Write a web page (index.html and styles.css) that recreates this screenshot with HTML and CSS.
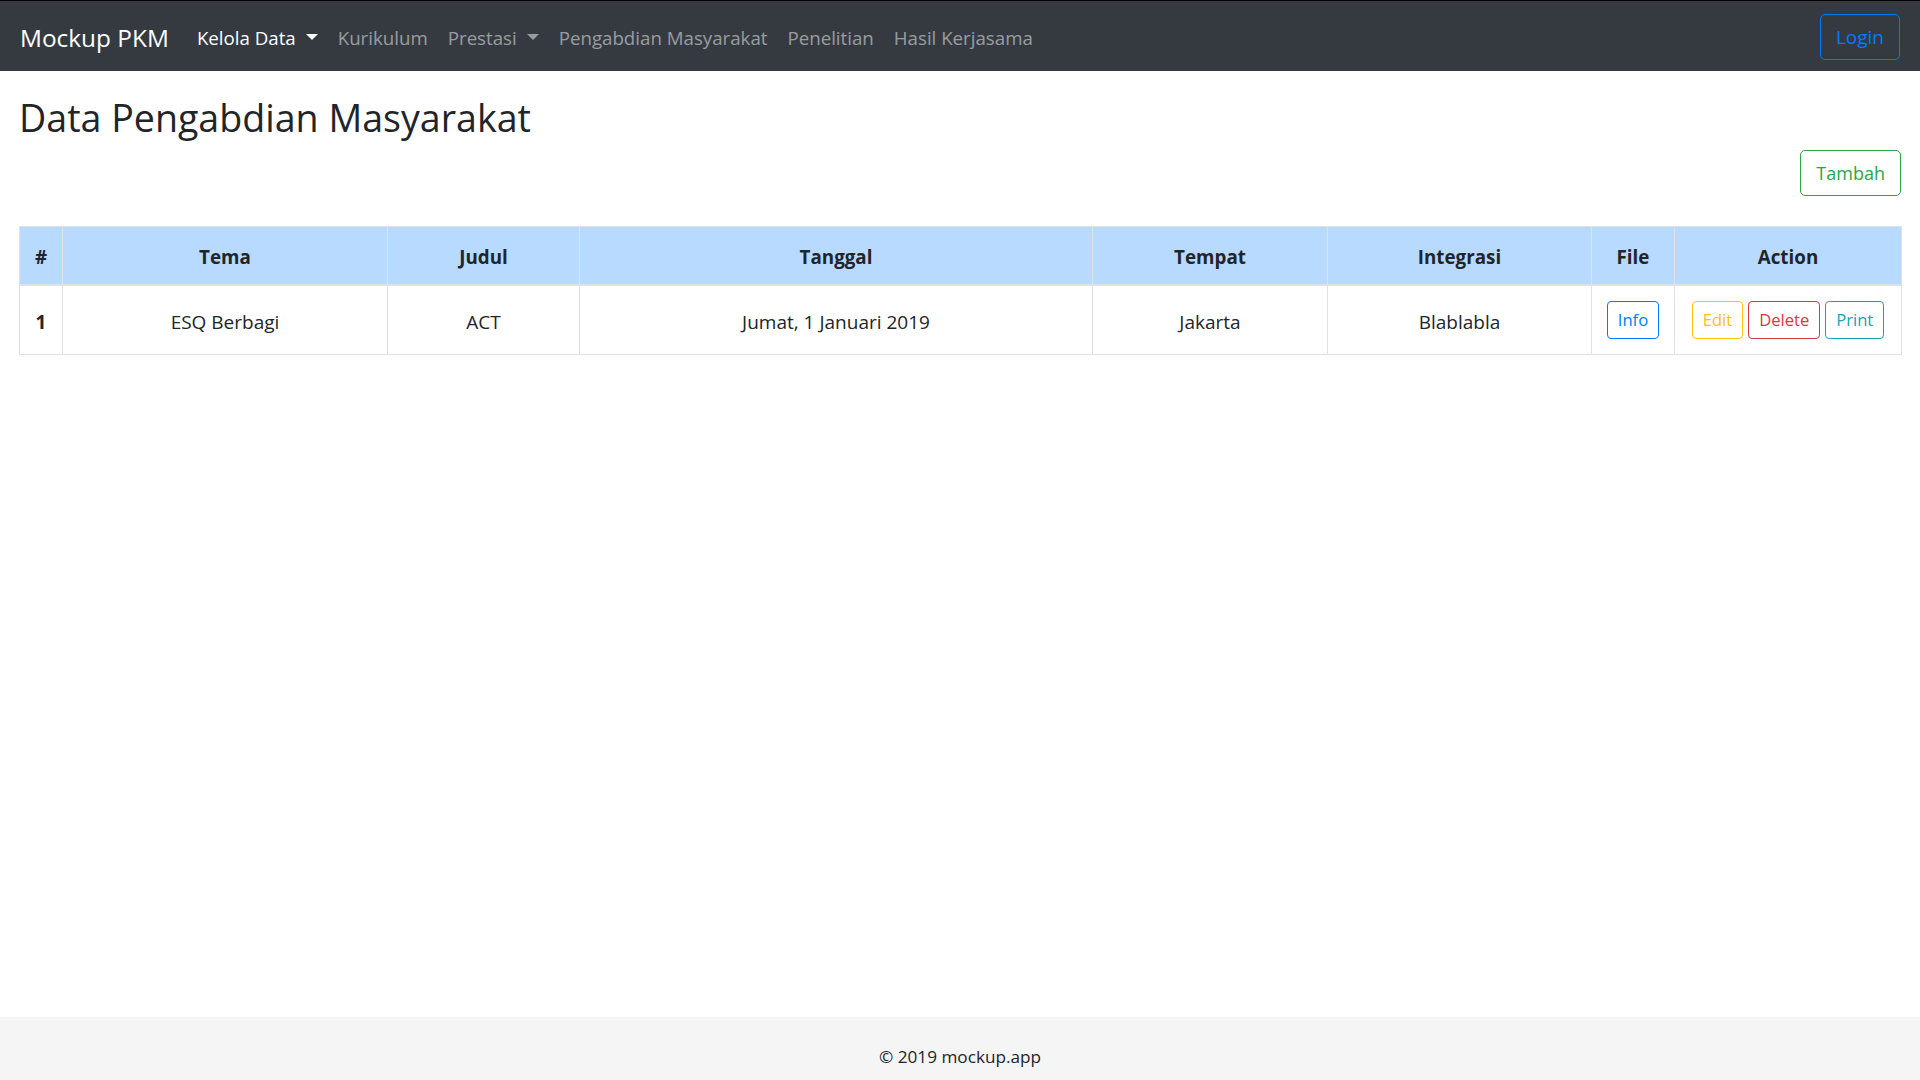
FILE: index.html
```html
<!DOCTYPE html>
<html lang="id">
<head>
<meta charset="utf-8">
<title>Mockup PKM</title>
<link rel="stylesheet" href="styles.css">
</head>
<body>
<nav class="navbar">
  <a class="brand" href="#">Mockup PKM</a>
  <ul class="nav">
    <li><a class="nav-link active caret" href="#">Kelola Data</a></li>
    <li><a class="nav-link" href="#">Kurikulum</a></li>
    <li><a class="nav-link caret" href="#">Prestasi</a></li>
    <li><a class="nav-link" href="#">Pengabdian Masyarakat</a></li>
    <li><a class="nav-link" href="#">Penelitian</a></li>
    <li><a class="nav-link" href="#">Hasil Kerjasama</a></li>
  </ul>
  <button class="btn btn-login btn-outline-primary">Login</button>
</nav>
<main class="container">
  <h1 class="title">Data Pengabdian Masyarakat</h1>
  <div class="toolbar"><button class="btn btn-add btn-outline-success">Tambah</button></div>
  <table class="table">
    <colgroup>
      <col class="c-no"><col class="c-tema"><col class="c-judul"><col class="c-tanggal">
      <col class="c-tempat"><col class="c-integrasi"><col class="c-file"><col class="c-action">
    </colgroup>
    <thead>
      <tr><th>#</th><th>Tema</th><th>Judul</th><th>Tanggal</th><th>Tempat</th><th>Integrasi</th><th>File</th><th>Action</th></tr>
    </thead>
    <tbody>
      <tr>
        <th>1</th>
        <td>ESQ Berbagi</td>
        <td>ACT</td>
        <td>Jumat, 1 Januari 2019</td>
        <td>Jakarta</td>
        <td>Blablabla</td>
        <td class="cell-btn"><button class="btn btn-sm btn-outline-primary">Info</button></td>
        <td class="cell-btn"><button class="btn btn-sm btn-outline-warning">Edit</button> <button class="btn btn-sm btn-outline-danger">Delete</button> <button class="btn btn-sm btn-outline-info">Print</button></td>
      </tr>
    </tbody>
  </table>
</main>
<footer class="footer">© 2019 mockup.app</footer>
</body>
</html>
```

FILE: styles.css
```css
* { box-sizing: border-box; }
html, body { margin: 0; padding: 0; }
body {
  font-family: "Open Sans", "Noto Sans", sans-serif;
  font-size: 19px;
  line-height: 30px;
  color: #212529;
  background: #fff;
  min-height: 100vh;
  display: flex;
  flex-direction: column;
}
a { text-decoration: none; }

.navbar {
  height: 71px;
  border-top: 1px solid #000;
  background: #343a40;
  display: flex;
  align-items: center;
  padding: 0 20px;
}
.brand {
  color: #fff;
  font-size: 24.4px;
  line-height: 37.5px;
  padding-top: 4px;
  margin-right: 18px;
}
.nav {
  list-style: none;
  margin: 0;
  padding: 0;
  display: flex;
  flex: 1;
}
.nav-link {
  display: block;
  padding: 12px 10px 8px;
  color: rgba(255, 255, 255, 0.5);
  font-size: 18.7px;
  line-height: 30px;
}
.nav-link.active { color: #fff; }
.caret::after {
  content: "";
  display: inline-block;
  margin-left: 10px;
  vertical-align: 5px;
  border-top: 6px solid;
  border-right: 6px solid transparent;
  border-left: 6px solid transparent;
  border-bottom: 0;
}

.btn {
  display: inline-block;
  font-family: inherit;
  font-size: 19px;
  line-height: 30px;
  padding: 7px 15px;
  border: 1px solid transparent;
  border-radius: 5px;
  background: transparent;
  cursor: pointer;
}
.btn-login { margin-top: 2px; }
.btn-add { font-size: 18px; }
.btn-sm {
  font-size: 16.6px;
  line-height: 26px;
  padding: 5px 10px;
  border-radius: 4px;
}
.btn-outline-primary { color: #007bff; border-color: #007bff; }
.btn-outline-success { color: #28a745; border-color: #28a745; }
.btn-outline-warning { color: #ffc107; border-color: #ffc107; }
.btn-outline-danger { color: #dc3545; border-color: #dc3545; }
.btn-outline-info { color: #17a2b8; border-color: #17a2b8; }

.container {
  flex: 1;
  padding: 0 19px;
}
.title {
  font-size: 37.6px;
  font-weight: 400;
  line-height: 48px;
  margin: 22.5px 0 8px;
}
.toolbar {
  text-align: right;
  margin-bottom: 30px;
}

.table {
  width: 100%;
  border-collapse: collapse;
  table-layout: fixed;
}
.c-no { width: 43px; }
.c-tema { width: 325px; }
.c-judul { width: 192px; }
.c-tanggal { width: 513px; }
.c-tempat { width: 235px; }
.c-integrasi { width: 264px; }
.c-file { width: 83px; }
.c-action { width: 227px; }
.table th, .table td {
  border: 1px solid #dee2e6;
  text-align: center;
  vertical-align: middle;
  padding: 17px 6px 13px;
  white-space: nowrap;
}
.table td.cell-btn { padding: 15px 6px; }
.table thead th {
  background: #b8daff;
  font-size: 18.8px;
  padding: 15px 6px 12px;
  border-bottom: 2px solid #dee2e6;
  font-weight: 700;
}
.table tbody th { font-weight: 700; }

.footer {
  background: #f5f5f5;
  height: 63px;
  padding-top: 25px;
  text-align: center;
  font-size: 17.2px;
  line-height: 30px;
}
```
